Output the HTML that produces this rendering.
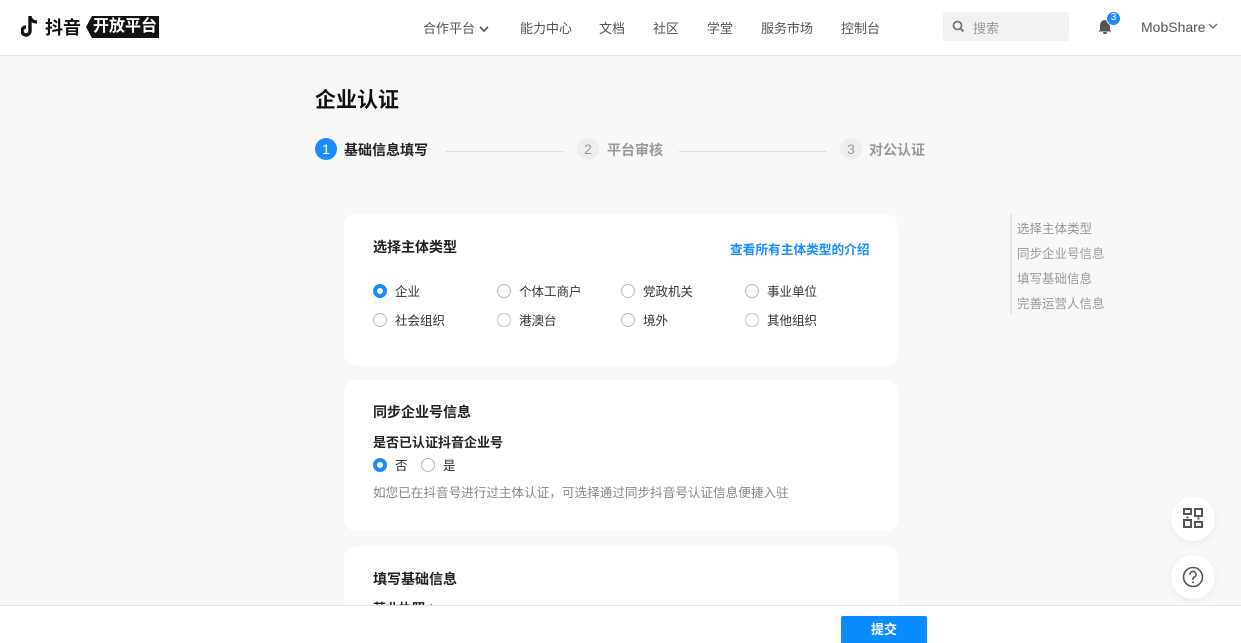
<!DOCTYPE html>
<html><head><meta charset="utf-8"><style>
*{margin:0;padding:0;box-sizing:border-box}
html,body{width:1241px;height:643px;overflow:hidden}
body{background:#f8f8f8;font-family:"Liberation Sans","Noto Sans CJK SC",sans-serif;color:#222;position:relative}
.a{position:absolute;white-space:nowrap}
.hdr{position:absolute;left:0;top:0;width:1241px;height:56px;background:#fff;border-bottom:1px solid #e6e6e6}
.nav{font-size:13px;color:#555;top:18px}
.card{position:absolute;left:344px;width:554px;background:#fff;border-radius:12px}
.h{font-size:14px;font-weight:bold;color:#222}
.r{position:absolute;width:14px;height:14px;border-radius:50%;border:1px solid #bbb;background:#fff}
.r.on{border:4px solid #1a8cff}
.lbl{font-size:12.5px;color:#333}
.side{font-size:12.5px;color:#999;left:1017px}
.fab{position:absolute;left:1171px;width:44px;height:44px;border-radius:50%;background:#fff;box-shadow:0 2px 8px rgba(0,0,0,.06)}
</style></head><body>
<div class="hdr"></div>
<svg class="a" style="left:21px;top:15px" width="18" height="24" viewBox="0 0 18 24"><path d="M9 1v15a4 4 0 1 1-4-4" fill="none" stroke="#111" stroke-width="3.4"/><path d="M9 2c1 3 3 5 7 5" fill="none" stroke="#111" stroke-width="3.2"/></svg>
<div class="a" style="left:45px;top:14px;font-size:18px;font-weight:bold;color:#111">抖音</div>
<div class="a" style="left:86px;top:16px;width:73px;height:22px;background:#111;clip-path:polygon(6px 0,100% 0,100% 100%,6px 100%,0 50%)"></div>
<div class="a" style="left:93px;top:16px;font-size:16px;font-weight:bold;color:#fff;line-height:22px">开放平台</div>
<div class="a nav" style="left:423px">合作平台 <svg width="10" height="8" viewBox="0 0 10 8"><path d="M1 2l4 4 4-4" fill="none" stroke="#555" stroke-width="1.6"/></svg></div>
<div class="a nav" style="left:520px">能力中心</div>
<div class="a nav" style="left:599px">文档</div>
<div class="a nav" style="left:653px">社区</div>
<div class="a nav" style="left:707px">学堂</div>
<div class="a nav" style="left:761px">服务市场</div>
<div class="a nav" style="left:841px">控制台</div>
<div class="a" style="left:943px;top:12px;width:126px;height:29px;background:#f1f2f2;border-radius:2px"></div>
<svg class="a" style="left:952px;top:20px" width="13" height="13" viewBox="0 0 13 13"><circle cx="5.5" cy="5.5" r="4" fill="none" stroke="#777" stroke-width="1.8"/><path d="M8.5 8.5l3 3" stroke="#777" stroke-width="2"/></svg>
<div class="a" style="left:973px;top:18px;font-size:13px;color:#999">搜索</div>
<svg class="a" style="left:1097px;top:17px" width="16" height="18" viewBox="0 0 16 18"><path d="M3 13V8a5 5 0 0 1 10 0v5l1.5 1.5h-13z" fill="#555"/><rect x="6" y="15" width="4" height="2" rx="1" fill="#555"/></svg>
<div class="a" style="left:1106px;top:11px;width:15px;height:15px;border-radius:50%;background:#1a8cff;border:1.5px solid #fff;color:#fff;font-size:10px;text-align:center;line-height:12px">3</div>
<div class="a" style="left:1141px;top:19px;font-size:14px;color:#555">MobShare</div>
<svg class="a" style="left:1208px;top:22px" width="10" height="8" viewBox="0 0 10 8"><path d="M1 2l4 4 4-4" fill="none" stroke="#777" stroke-width="1.5"/></svg>

<div class="a" style="left:315px;top:84px;font-size:21px;font-weight:bold;color:#111">企业认证</div>
<div class="a" style="left:315px;top:138px;width:22px;height:22px;border-radius:50%;background:#1a8cff;color:#fff;font-size:14px;text-align:center;line-height:22px">1</div>
<div class="a" style="left:344px;top:140px;font-size:14px;font-weight:bold;color:#222">基础信息填写</div>
<div class="a" style="left:446px;top:151px;width:117px;height:1px;background:#ddd"></div>
<div class="a" style="left:577px;top:138px;width:22px;height:22px;border-radius:50%;background:#eee;color:#999;font-size:14px;text-align:center;line-height:22px">2</div>
<div class="a" style="left:607px;top:140px;font-size:14px;font-weight:bold;color:#999">平台审核</div>
<div class="a" style="left:679px;top:151px;width:147px;height:1px;background:#ddd"></div>
<div class="a" style="left:840px;top:138px;width:22px;height:22px;border-radius:50%;background:#eee;color:#999;font-size:14px;text-align:center;line-height:22px">3</div>
<div class="a" style="left:869px;top:140px;font-size:14px;font-weight:bold;color:#999">对公认证</div>

<div class="card" style="top:214px;height:151px"></div>
<div class="a h" style="left:373px;top:237px">选择主体类型</div>
<div class="a" style="left:730px;top:239px;font-size:12.7px;font-weight:bold;color:#1a8cff">查看所有主体类型的介绍</div>
<div class="r on" style="left:373px;top:284px"></div><div class="a lbl" style="left:395px;top:281px">企业</div>
<div class="r" style="left:497px;top:284px"></div><div class="a lbl" style="left:519px;top:281px">个体工商户</div>
<div class="r" style="left:621px;top:284px"></div><div class="a lbl" style="left:643px;top:281px">党政机关</div>
<div class="r" style="left:745px;top:284px"></div><div class="a lbl" style="left:767px;top:281px">事业单位</div>
<div class="r" style="left:373px;top:313px"></div><div class="a lbl" style="left:395px;top:310px">社会组织</div>
<div class="r" style="left:497px;top:313px"></div><div class="a lbl" style="left:519px;top:310px">港澳台</div>
<div class="r" style="left:621px;top:313px"></div><div class="a lbl" style="left:643px;top:310px">境外</div>
<div class="r" style="left:745px;top:313px"></div><div class="a lbl" style="left:767px;top:310px">其他组织</div>

<div class="card" style="top:380px;height:151px"></div>
<div class="a h" style="left:373px;top:402px">同步企业号信息</div>
<div class="a" style="left:373px;top:432px;font-size:13px;font-weight:bold;color:#222">是否已认证抖音企业号</div>
<div class="r on" style="left:373px;top:458px"></div><div class="a lbl" style="left:395px;top:455px">否</div>
<div class="r" style="left:421px;top:458px"></div><div class="a lbl" style="left:443px;top:455px">是</div>
<div class="a" style="left:373px;top:482px;font-size:12.6px;color:#888">如您已在抖音号进行过主体认证，可选择通过同步抖音号认证信息便捷入驻</div>

<div class="card" style="top:547px;height:80px"></div>
<div class="a h" style="left:373px;top:569px">填写基础信息</div>
<div class="a" style="left:373px;top:598px;font-size:13px;font-weight:bold;color:#222">营业执照 <span style="color:#f33">*</span></div>

<div class="a" style="left:1010px;top:214px;width:2px;height:100px;background:#e6e6e6"></div>
<div class="a side" style="top:218px">选择主体类型</div>
<div class="a side" style="top:243px">同步企业号信息</div>
<div class="a side" style="top:268px">填写基础信息</div>
<div class="a side" style="top:293px">完善运营人信息</div>

<div class="fab" style="top:497px"></div>
<svg class="a" style="left:1183px;top:508px" width="20" height="20" viewBox="0 0 20 20" fill="none" stroke="#555" stroke-width="2"><rect x="1" y="1" width="7" height="5"/><rect x="12" y="1" width="7" height="7"/><rect x="1" y="12" width="7" height="7"/><rect x="12" y="14" width="7" height="5"/><path d="M4.5 8.5v2M15.5 9.5v2"/></svg>
<div class="fab" style="top:555px"></div>
<svg class="a" style="left:1182px;top:566px" width="22" height="22" viewBox="0 0 22 22"><circle cx="11" cy="11" r="9.5" fill="none" stroke="#555" stroke-width="1.6"/><path d="M8 8.5a3 3 0 1 1 4 2.8c-.8.4-1 1-1 1.7v1" fill="none" stroke="#555" stroke-width="1.6"/><circle cx="11" cy="16.3" r="1" fill="#555"/></svg>

<div class="a" style="left:0;top:605px;width:1241px;height:38px;background:#fff;border-top:1px solid #e6e6e6"></div>
<div class="a" style="left:841px;top:616px;width:86px;height:27px;background:#0a8cff;border-radius:2px 2px 0 0;color:#fff;font-size:13px;font-weight:bold;text-align:center;line-height:28px">提交</div>
</body></html>
